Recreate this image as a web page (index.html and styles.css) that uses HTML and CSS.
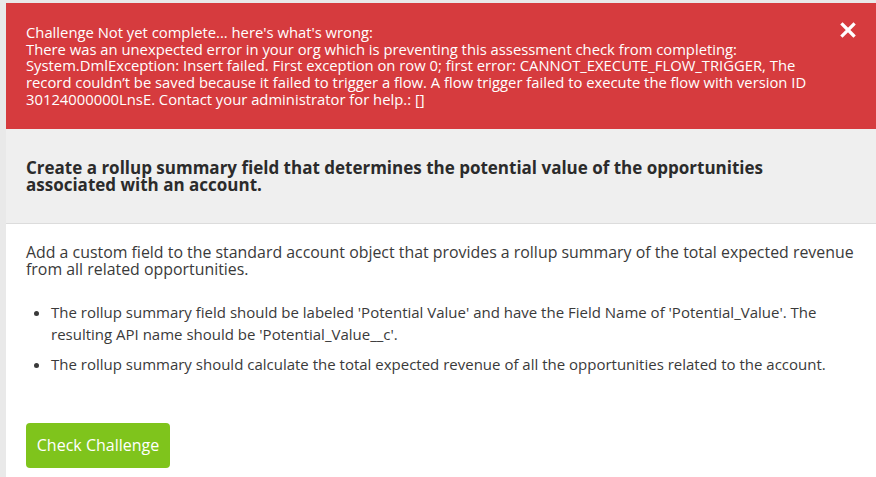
FILE: index.html
```html
<!DOCTYPE html>
<html>
<head>
<meta charset="utf-8">
<link rel="stylesheet" href="styles.css">
</head>
<body>
<div class="page">
  <div class="panel">
    <div class="alert">
      <div class="alert-text">Challenge Not yet complete... here's what's wrong:<br>There was an unexpected error in your org which is preventing this assessment check from completing:<br>System.DmlException: Insert failed. First exception on row 0; first error: CANNOT_EXECUTE_FLOW_TRIGGER, The<br>record couldn’t be saved because it failed to trigger a flow. A flow trigger failed to execute the flow with version ID<br>30124000000LnsE. Contact your administrator for help.: []</div>
      <button class="close" aria-label="Close"><svg width="16" height="16" viewBox="0 0 16 16"><path d="M2.5 2.5 L13.5 13.5 M13.5 2.5 L2.5 13.5" stroke="#fff" stroke-width="3.2" stroke-linecap="square"/></svg></button>
    </div>
    <div class="task-head">
      <h2 class="task-title">Create a rollup summary field that determines the potential value of the opportunities associated with an account.</h2>
    </div>
    <div class="task-body">
      <p class="intro">Add a custom field to the standard account object that provides a rollup summary of the total expected revenue from all related opportunities.</p>
      <ul class="reqs">
        <li>The rollup summary field should be labeled 'Potential Value' and have the Field Name of 'Potential_Value'. The resulting API name should be 'Potential_Value__c'.</li>
        <li>The rollup summary should calculate the total expected revenue of all the opportunities related to the account.</li>
      </ul>
      <button class="check">Check Challenge</button>
    </div>
  </div>
</div>
</body>
</html>
```
FILE: styles.css
```css
html, body {
  margin: 0;
  padding: 0;
  background: #e9e9e9;
  height: 100%;
  overflow: hidden;
}
.page {
  padding: 3px 0 0 6px;
  font-family: "Open Sans", "Noto Sans", sans-serif;
}
.panel {
  background: #fff;
  min-height: 480px;
}
.alert {
  position: relative;
  background: #d63b3e;
  color: #fff;
  padding: 21px 20px 21px 20px;
}
.alert-text {
  font-size: 14.8px;
  line-height: 16.7px;
  white-space: nowrap;
}
.close {
  position: absolute;
  top: 19px;
  right: 20px;
  background: none;
  border: 0;
  padding: 0;
  cursor: pointer;
  display: flex;
}
.task-head {
  background: #efefef;
  border-bottom: 1px solid #dcdcdc;
  padding: 30px 20px 30px 20px;
}
.task-title {
  margin: 0;
  font-size: 17px;
  line-height: 17px;
  font-weight: 700;
  color: #2b2b2b;
}
.task-body {
  padding: 20px 20px 0 20px;
  color: #3a3a3a;
  font-size: 15px;
}
.intro {
  margin: 0;
  font-size: 15.9px;
  line-height: 17px;
}
.reqs {
  margin: 23px 0 0 0;
  padding-left: 25px;
}
.reqs li {
  line-height: 22px;
  margin-bottom: 8px;
}
.check {
  margin-top: 40px;
  background: #7fc41c;
  color: #fff;
  border: 0;
  border-radius: 4px;
  font-family: inherit;
  font-size: 16px;
  padding: 0 10px;
  height: 45px;
  width: 144px;
}
```
